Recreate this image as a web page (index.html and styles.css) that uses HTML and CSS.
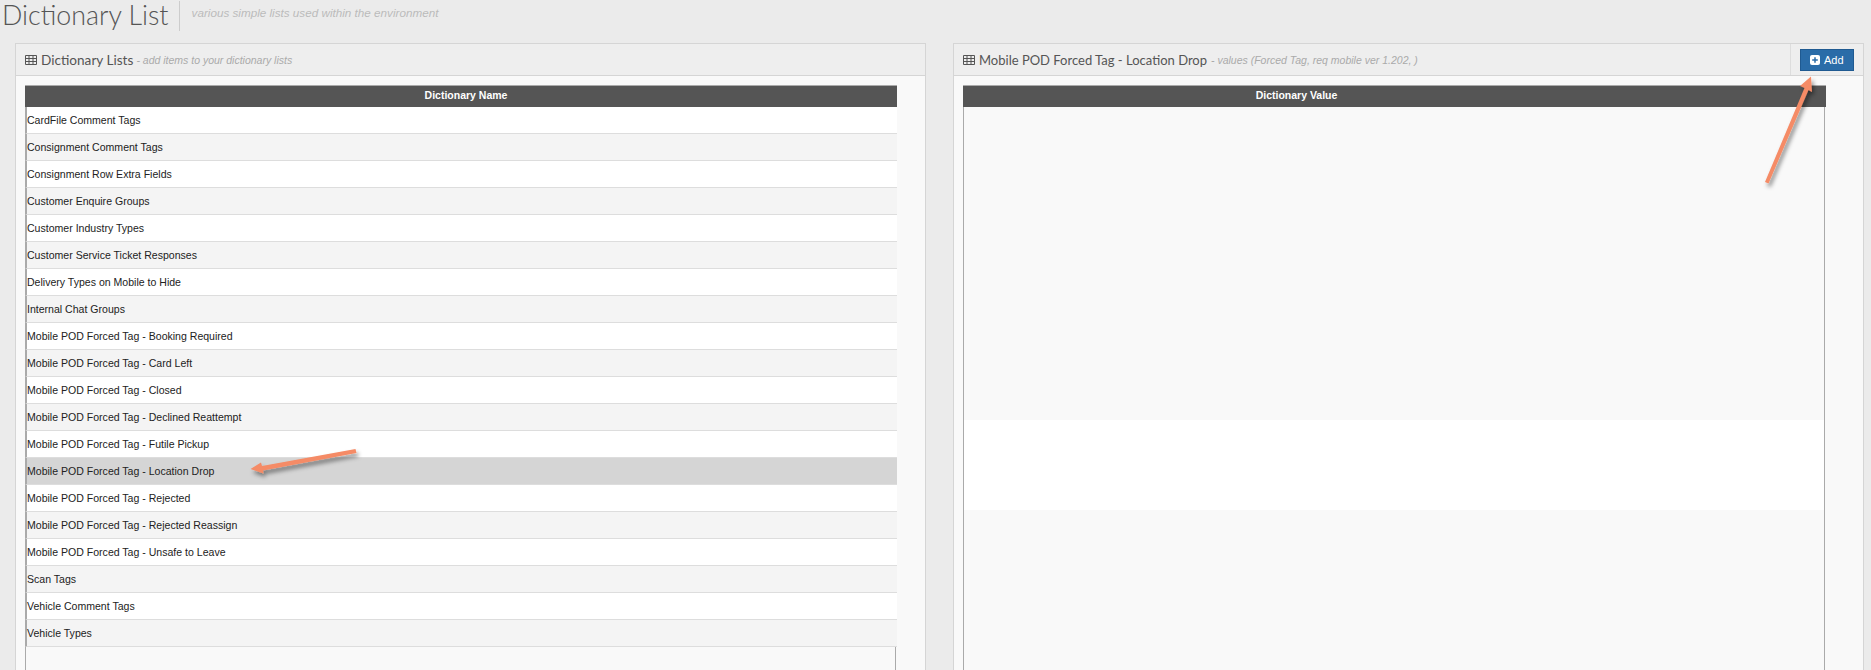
FILE: index.html
```html
<!DOCTYPE html>
<html lang="en">
<head>
    <meta charset="UTF-8">
    <title>Dictionary List</title>
    <link rel="stylesheet" href="styles.css">
</head>
<body>
    <div class="page-title">
        <h1>Dictionary List</h1>
        <span class="page-sub">various simple lists used within the environment</span>
    </div>

    <div class="columns">
        <div class="panel panel-left">
            <div class="panel-head">
                <div class="panel-title">
                    <svg class="grid-icon" viewBox="0 0 12 10" width="12" height="10"><path d="M.5.5h11v9H.5zM.5 3.5h11M.5 6.5h11M4 .5v9M8 .5v9" fill="none" stroke="#555" stroke-width="1"/></svg>
                    <span class="title-text">Dictionary Lists</span>
                    <em>- add items to your dictionary lists</em>
                </div>
            </div>
            <div class="panel-body">
                <div class="dict-table">
                    <div class="table-head">Dictionary Name</div>
                    <div class="row">CardFile Comment Tags</div>
                    <div class="row alt">Consignment Comment Tags</div>
                    <div class="row">Consignment Row Extra Fields</div>
                    <div class="row alt">Customer Enquire Groups</div>
                    <div class="row">Customer Industry Types</div>
                    <div class="row alt">Customer Service Ticket Responses</div>
                    <div class="row">Delivery Types on Mobile to Hide</div>
                    <div class="row alt">Internal Chat Groups</div>
                    <div class="row">Mobile POD Forced Tag - Booking Required</div>
                    <div class="row alt">Mobile POD Forced Tag - Card Left</div>
                    <div class="row">Mobile POD Forced Tag - Closed</div>
                    <div class="row alt">Mobile POD Forced Tag - Declined Reattempt</div>
                    <div class="row">Mobile POD Forced Tag - Futile Pickup</div>
                    <div class="row selected">Mobile POD Forced Tag - Location Drop</div>
                    <div class="row">Mobile POD Forced Tag - Rejected</div>
                    <div class="row alt">Mobile POD Forced Tag - Rejected Reassign</div>
                    <div class="row">Mobile POD Forced Tag - Unsafe to Leave</div>
                    <div class="row alt">Scan Tags</div>
                    <div class="row">Vehicle Comment Tags</div>
                    <div class="row alt">Vehicle Types</div>
                    <div class="table-rest"></div>
                </div>
            </div>
        </div>

        <div class="panel panel-right">
            <div class="panel-head">
                <div class="panel-title">
                    <svg class="grid-icon" viewBox="0 0 12 10" width="12" height="10"><path d="M.5.5h11v9H.5zM.5 3.5h11M.5 6.5h11M4 .5v9M8 .5v9" fill="none" stroke="#555" stroke-width="1"/></svg>
                    <span class="title-text">Mobile POD Forced Tag - Location Drop</span>
                    <em>- values (Forced Tag, req mobile ver 1.202, )</em>
                </div>
                <div class="head-action">
                    <button class="btn-add">
                        <svg viewBox="0 0 10 10" width="10" height="10"><rect width="10" height="10" rx="2" fill="#fff"/><path d="M5 2.2v5.6M2.2 5h5.6" stroke="#2a6ca8" stroke-width="1.5"/></svg>
                        Add
                    </button>
                </div>
            </div>
            <div class="panel-body">
                <div class="value-table">
                    <div class="table-head">Dictionary Value</div>
                    <div class="value-body">
                        <div class="value-blank"></div>
                    </div>
                </div>
            </div>
        </div>
    </div>

    <!-- annotation arrows drawn over the screenshot -->
    <svg class="arrows" width="1871" height="670" viewBox="0 0 1871 670">
        <defs>
            <filter id="arrow-shadow" x="-30%" y="-30%" width="160%" height="160%">
                <feDropShadow dx="2" dy="3.5" stdDeviation="2" flood-color="#000" flood-opacity="0.45"/>
            </filter>
        </defs>
        <g filter="url(#arrow-shadow)" fill="#f58b66">
            <path d="M355.5 449 L356.5 453 L263 470.5 L263.5 473.5 L250.5 469 L261 462.5 L262 466 Z"/>
            <path d="M1765 182 L1768.5 183.5 L1808.5 90 L1812 92 L1811 76.5 L1800 86 L1804.5 88 Z"/>
        </g>
    </svg>
</body>
</html>
```

FILE: styles.css
```css
body {
    margin: 0;
    height: 670px;
    overflow: hidden;
    background: #ebebeb;
    font-family: "Liberation Sans", Arial, sans-serif;
    position: relative;
}
.page-title {
    display: flex;
    align-items: flex-start;
    height: 43px;
    box-sizing: border-box;
}
h1 {
    margin: 1px 0 0;
    padding: 0 10px 0 2px;
    font-family: Lato, sans-serif;
    font-weight: 300;
    font-size: 26.8px;
    line-height: 28px;
    color: #555;
    height: 30px;
    border-right: 1px solid #ccc;
}
.page-sub {
    margin-left: 12px;
    margin-top: 6px;
    font-size: 11.7px;
    font-style: italic;
    color: #bbb;
}
.columns {
    display: flex;
    padding-left: 15px;
    gap: 27px;
}
.panel {
    width: 911px;
    height: 627px;
    box-sizing: border-box;
    border: 1px solid #d5d5d5;
    border-bottom: 0;
    background: #f9f9f9;
}
.panel-head {
    display: flex;
    justify-content: space-between;
    height: 32px;
    box-sizing: border-box;
    background: #eee;
    border-bottom: 1px solid #d5d5d5;
}
.panel-title {
    display: flex;
    align-items: center;
    padding-left: 9px;
    color: #aaa;
}
.grid-icon {
    margin-right: 4px;
}
.title-text {
    font-family: Lato, sans-serif;
    font-size: 13px;
    color: #555;
    margin-right: 4px;
}
.panel-left .title-text {
    font-size: 13.6px;
    margin-right: 3px;
}
.panel-title em {
    font-size: 10.5px;
}
.head-action {
    width: 73px;
    box-sizing: border-box;
    border-left: 1px solid #ddd;
    padding: 5px 0 0 9px;
}
.btn-add {
    display: flex;
    align-items: center;
    gap: 4px;
    width: 54px;
    height: 22px;
    padding: 0 0 0 9px;
    box-sizing: border-box;
    background: #2a6ca8;
    border: 1px solid #1f5a91;
    color: #fff;
    font-family: "Liberation Sans", Arial, sans-serif;
    font-size: 11px;
}
.panel-body {
    padding: 9px 0 0 9px;
}
.dict-table {
    width: 872px;
    font-size: 10.55px;
    color: #222;
}
.table-head {
    height: 22px;
    line-height: 19px;
    background: #555;
    color: #fff;
    font-size: 10.5px;
    font-weight: bold;
    text-align: center;
    border-top: 1px solid #aaa;
    box-sizing: border-box;
}
.dict-table .table-head {
    padding-left: 10px;
}
.value-table .table-head {
    padding-right: 196px;
}
.row {
    height: 27px;
    line-height: 26px;
    box-sizing: border-box;
    background: #fff;
    border-bottom: 1px solid #ddd;
    border-left: 2px solid #aaa;
}
.row.alt {
    background: #f4f4f4;
}
.row.selected {
    background: #d5d5d5;
}
.table-rest {
    height: 23px;
    width: 871px;
    box-sizing: border-box;
    border-left: 1px solid #aaa;
    border-right: 1px solid #aaa;
}
.value-table {
    width: 863px;
}
.value-body {
    height: 563px;
    width: 862px;
    box-sizing: border-box;
    padding-top: 313px;
    border-left: 1px solid #aaa;
    border-right: 1px solid #aaa;
}
.value-blank {
    height: 90px;
    background: #fff;
}
.arrows {
    position: absolute;
    left: 0;
    top: 0;
    pointer-events: none;
}
```
